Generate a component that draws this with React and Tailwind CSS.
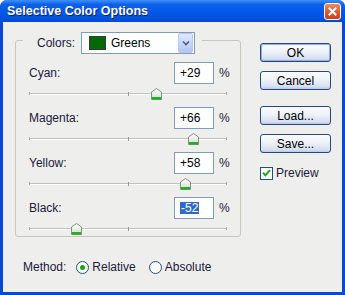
import React from 'react';

const REGLER = [
  { name: 'Cyan:', wert: '+29', v: 29 },
  { name: 'Magenta:', wert: '+66', v: 66 },
  { name: 'Yellow:', wert: '+58', v: 58 },
  { name: 'Black:', wert: '-52', v: -52, markiert: true },
];

const SPUR = 198;

function Knopf({ children, standard }) {
  return (
    <div
      className={
        'w-[71px] h-[19px] flex items-center justify-center rounded-[3px] border border-[#26468a] text-[12px] text-black bg-[linear-gradient(180deg,#fbfcfe_0%,#eef2f9_45%,#d7e0ef_85%,#bccae2_100%)] ' +
        (standard ? 'shadow-[inset_0_0_0_1px_#8fb0ea]' : '')
      }
    >
      {children}
    </div>
  );
}

function Schieber({ v }) {
  const pos = ((v + 100) / 200) * (SPUR - 1);
  return (
    <div className="relative h-[15px] w-[198px]">
      <div className="absolute left-0 right-0 top-[9px] h-[2px] border-t border-[#c2c2ba] border-b border-b-white" />
      <div className="absolute left-0 top-[8px] w-px h-[3px] bg-[#a8a8a0]" />
      <div className="absolute right-0 top-[8px] w-px h-[3px] bg-[#a8a8a0]" />
      <div className="absolute left-[99px] top-[8px] w-px h-[4px] bg-[#96968e]" />
      <svg className="absolute top-[4px]" style={{ left: pos - 5 }} width="11" height="12" viewBox="0 0 11 12">
        <defs>
          <linearGradient id={'g' + v} x1="0" y1="0" x2="0" y2="1">
            <stop offset="0" stopColor="#ffffff" />
            <stop offset="1" stopColor="#d4dad4" />
          </linearGradient>
        </defs>
        <path d="M0.5 4 L5.5 0.5 L10.5 4 L10.5 11.5 L0.5 11.5 Z" fill={'url(#g' + v + ')'} stroke="#7f927f" />
        <rect x="1" y="9" width="9" height="2.5" fill="#22b022" />
      </svg>
    </div>
  );
}

export default function App() {
  return (
    <div className="w-[345px] h-[295px] bg-white font-['Liberation_Sans',Arial,sans-serif] text-[12px] leading-none">
      <div className="flex flex-col w-full h-full rounded-t-[7px] overflow-hidden bg-[#0a48d4]">
        {/* Titelleiste */}
        <div className="h-[22px] flex items-center justify-between pl-[7px] pr-[4px] bg-[linear-gradient(180deg,#3f90fb_0%,#0d60ea_20%,#0457e6_60%,#004fdc_90%,#0446c8_100%)]">
          <span className="text-white font-bold text-[12.5px] [text-shadow:1px_1px_0_#0d1f7a]">Selective Color Options</span>
          <div className="w-[17px] h-[17px] rounded-[3px] border border-white flex items-center justify-center bg-[linear-gradient(180deg,#ef8a62_0%,#e1562e_55%,#c8401c_100%)]">
            <svg width="9" height="9" viewBox="0 0 9 9">
              <path d="M1.5 1.5 L7.5 7.5 M7.5 1.5 L1.5 7.5" stroke="white" strokeWidth="2" strokeLinecap="square" />
            </svg>
          </div>
        </div>

        {/* Inhalt */}
        <div className="flex-1 mx-[3px] mb-[3px] bg-[#eeeeec] flex text-[#1a1a3c]">
          <div className="pl-[12px] pt-[18px]">
            <div className="w-[226px] border border-[#c7c7c0] rounded-[3px] pb-[2px]">
              <div className="-mt-[9px] ml-[7px] w-[179px] flex items-center bg-[#eeeeec] pl-[14px] pr-[7px]">
                <span className="w-[44px]">Colors:</span>
                <div className="w-[114px] h-[22px] flex items-center border border-[#7f9db9] bg-white">
                  <div className="ml-[7px] w-[17px] h-[14px] bg-[#006a06] border border-[#3a3a3a]" />
                  <span className="ml-[5px] flex-1 text-black">Greens</span>
                  <div className="w-[15px] h-[20px] mr-px flex items-center justify-center rounded-[2px] border border-[#b6c8f2] bg-[linear-gradient(180deg,#dfe8fd_0%,#c4d4f8_60%,#b3c6f3_100%)]">
                    <svg width="8" height="6" viewBox="0 0 8 6">
                      <path d="M1 1.5 L4 4.5 L7 1.5" stroke="#4a5d88" strokeWidth="1.6" fill="none" />
                    </svg>
                  </div>
                </div>
              </div>

              <div className="mt-[8px] flex flex-col gap-[8px] pl-[13px] pr-[10px]">
                {REGLER.map((r) => (
                  <div key={r.name}>
                    <div className="h-[22px] flex items-center">
                      <span className="flex-1">{r.name}</span>
                      <div className="w-[40px] h-[22px] flex items-center border border-[#7f9db9] bg-white pl-[5px] text-black">
                        {r.markiert ? <span className="bg-[#316ac5] text-white px-px">{r.wert}</span> : r.wert}
                      </div>
                      <span className="ml-[5px] w-[11px]">%</span>
                    </div>
                    <Schieber v={r.v} />
                  </div>
                ))}
              </div>
            </div>

            <div className="mt-[22px] h-[16px] pl-[8px] flex items-center">
              <span>Method:</span>
              <div className="ml-[10px] w-[13px] h-[13px] rounded-full border border-[#1c5180] bg-white flex items-center justify-center">
                <div className="w-[5px] h-[5px] rounded-full bg-[#21a121]" />
              </div>
              <span className="ml-[3px]">Relative</span>
              <div className="ml-[13px] w-[13px] h-[13px] rounded-full border border-[#1c5180] bg-white" />
              <span className="ml-[3px]">Absolute</span>
            </div>
          </div>

          <div className="ml-[19px] pt-[21px] flex flex-col">
            <Knopf standard>OK</Knopf>
            <div className="mt-[9px]"><Knopf>Cancel</Knopf></div>
            <div className="mt-[16px]"><Knopf>Load...</Knopf></div>
            <div className="mt-[9px]"><Knopf>Save...</Knopf></div>
            <div className="mt-[13px] h-[14px] flex items-center">
              <div className="w-[13px] h-[13px] border border-[#1c5180] bg-white flex items-center justify-center">
                <svg width="9" height="8" viewBox="0 0 9 8">
                  <path d="M1 3.8 L3.4 6.3 L8 1.2" stroke="#21a121" strokeWidth="2" fill="none" />
                </svg>
              </div>
              <span className="ml-[3px]">Preview</span>
            </div>
          </div>
        </div>
      </div>
    </div>
  );
}
